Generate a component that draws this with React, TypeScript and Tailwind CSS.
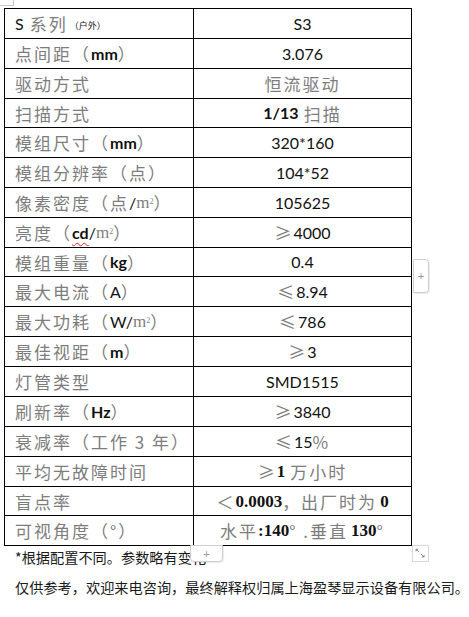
import type { ReactNode } from "react";

// gray CJK text (the SimSun-looking parts)
const G = ({ children }: { children: ReactNode }) => (
  <span className="font-['Noto_Sans_CJK_SC',sans-serif] text-[17px] tracking-[2px] text-[#7d7d7d]">
    {children}
  </span>
);

// black latin parts
const B = ({ children, bold }: { children: ReactNode; bold?: boolean }) => (
  <span className={`text-[16px] text-[#111] ${bold ? "font-bold" : ""}`}>{children}</span>
);

// serif digits used in the last rows
const S = ({ children }: { children: ReactNode }) => (
  <span className="font-['Liberation_Serif',serif] text-[17px] font-bold text-[#111]">{children}</span>
);

const M2 = () => (
  <span className="font-['Liberation_Serif',serif] text-[17px] text-[#7d7d7d]">
    m<sup className="text-[8px]">2</sup>
  </span>
);

type Row = { h: string; left: ReactNode; right: ReactNode };

const rows: Row[] = [
  {
    h: "h-[30px]",
    left: (
      <>
        <B>S</B>
        <span className="w-[6px]" />
        <G>系列</G>
        <span className="ml-[2px] mt-[4px] text-[9px] text-[#111]">（户外）</span>
      </>
    ),
    right: <B>S3</B>,
  },
  {
    h: "h-[30px]",
    left: (
      <>
        <G>点间距（</G>
        <B bold>mm</B>
        <G>）</G>
      </>
    ),
    right: <B>3.076</B>,
  },
  { h: "h-[30px]", left: <G>驱动方式</G>, right: <G>恒流驱动</G> },
  {
    h: "h-[29px]",
    left: <G>扫描方式</G>,
    right: (
      <>
        <B bold>1/13</B>
        <span className="w-[5px]" />
        <G>扫描</G>
      </>
    ),
  },
  {
    h: "h-[30px]",
    left: (
      <>
        <G>模组尺寸（</G>
        <B bold>mm</B>
        <G>）</G>
      </>
    ),
    right: <B>320*160</B>,
  },
  { h: "h-[30px]", left: <G>模组分辨率（点）</G>, right: <B>104*52</B> },
  {
    h: "h-[30px]",
    left: (
      <>
        <G>像素密度（点</G>
        <B>/</B>
        <M2 />
        <G>）</G>
      </>
    ),
    right: <B>105625</B>,
  },
  {
    h: "h-[30px]",
    left: (
      <>
        <G>亮度（</G>
        <span className="text-[16px] font-bold text-[#111] underline decoration-wavy decoration-[#e02020] decoration-1 underline-offset-[3px]">
          cd
        </span>
        <B>/</B>
        <M2 />
        <G>）</G>
      </>
    ),
    right: (
      <>
        <G>≥</G>
        <B>4000</B>
      </>
    ),
  },
  {
    h: "h-[29px]",
    left: (
      <>
        <G>模组重量（</G>
        <B bold>kg</B>
        <G>）</G>
      </>
    ),
    right: <B>0.4</B>,
  },
  {
    h: "h-[30px]",
    left: (
      <>
        <G>最大电流（</G>
        <B>A</B>
        <G>）</G>
      </>
    ),
    right: (
      <>
        <G>≤</G>
        <B>8.94</B>
      </>
    ),
  },
  {
    h: "h-[30px]",
    left: (
      <>
        <G>最大功耗（</G>
        <B>W/</B>
        <M2 />
        <G>）</G>
      </>
    ),
    right: (
      <>
        <G>≤</G>
        <B>786</B>
      </>
    ),
  },
  {
    h: "h-[30px]",
    left: (
      <>
        <G>最佳视距（</G>
        <B bold>m</B>
        <G>）</G>
      </>
    ),
    right: (
      <>
        <G>≥</G>
        <B>3</B>
      </>
    ),
  },
  { h: "h-[30px]", left: <G>灯管类型</G>, right: <B>SMD1515</B> },
  {
    h: "h-[30px]",
    left: (
      <>
        <G>刷新率（</G>
        <B bold>Hz</B>
        <G>）</G>
      </>
    ),
    right: (
      <>
        <G>≥</G>
        <B>3840</B>
      </>
    ),
  },
  {
    h: "h-[30px]",
    left: <G>衰减率（工作 3 年）</G>,
    right: (
      <>
        <G>≤</G>
        <B>15</B>
        <G>%</G>
      </>
    ),
  },
  {
    h: "h-[30px]",
    left: <G>平均无故障时间</G>,
    right: (
      <>
        <G>≥</G>
        <S>1</S>
        <span className="w-[5px]" />
        <G>万小时</G>
      </>
    ),
  },
  {
    h: "h-[29px]",
    left: <G>盲点率</G>,
    right: (
      <>
        <G>＜</G>
        <S>0.0003</S>
        <G>，出厂时为</G>
        <span className="w-[3px]" />
        <S>0</S>
      </>
    ),
  },
  {
    h: "h-[30px]",
    left: <G>可视角度（°）</G>,
    right: (
      <>
        <G>水平</G>
        <S>:140</S>
        <G>° .垂直</G>
        <span className="w-[3px]" />
        <S>130</S>
        <G>°</G>
      </>
    ),
  },
];

export default function App() {
  return (
    <main className="relative h-[617px] w-[469px] overflow-hidden bg-white font-['Lato','Noto_Sans_CJK_SC',sans-serif] text-[#111]">
      {/* table move handle */}
      <div className="absolute left-[-1px] top-[-1px] h-[7px] w-[15px] border border-[#c8c8c8] bg-white" />

      {/* Spec table */}
      <div className="ml-[4px] mt-[8px] w-[408px] border-l border-t border-black">
        {rows.map((r, i) => (
          <div key={i} className={`flex border-b border-black ${r.h}`}>
            <div className="flex w-[189px] items-center whitespace-nowrap border-r border-black pl-[10px] leading-none">
              {r.left}
            </div>
            <div className="flex w-[218px] items-center justify-center whitespace-nowrap border-r border-black leading-none">
              {r.right}
            </div>
          </div>
        ))}
      </div>

      {/* Footer notes */}
      <div className="pl-[15px] font-['Noto_Sans_CJK_SC',sans-serif] text-[14.2px] leading-[20px] text-[#1a1a1a]">
        <p className="mt-[1px]">*根据配置不同。参数略有变化</p>
        <p className="mt-[10px]">仅供参考，欢迎来电咨询，最终解释权归属上海盈琴显示设备有限公司。</p>
      </div>

      {/* add-column button */}
      <div className="absolute left-[413px] top-[259px] flex h-[34px] w-[16px] items-center justify-center rounded-r-[4px] border border-[#cfcfcf] bg-white text-[12px] leading-none text-[#9a9a9a] shadow-[1px_1px_1px_rgba(0,0,0,0.08)]">
        +
      </div>

      {/* add-row button */}
      <div className="absolute left-[190px] top-[545px] flex h-[17px] w-[33px] items-center justify-center rounded-b-[4px] border border-[#cfcfcf] bg-white text-[12px] leading-none text-[#9a9a9a] shadow-[1px_1px_1px_rgba(0,0,0,0.08)]">
        +
      </div>

      {/* resize handle */}
      <div className="absolute left-[412px] top-[545px] h-[17px] w-[17px] border border-[#d8d8d8] bg-white">
        <svg viewBox="0 0 17 17" className="h-full w-full">
          <path d="M3 3 L6.5 3 L3 6.5 Z" fill="#8a8a8a" />
          <path d="M3.5 3.5 L7 7" stroke="#8a8a8a" strokeWidth="1" />
          <path d="M13 13 L9.5 13 L13 9.5 Z" fill="#8a8a8a" />
          <path d="M12.5 12.5 L9 9" stroke="#8a8a8a" strokeWidth="1" />
        </svg>
      </div>
    </main>
  );
}
